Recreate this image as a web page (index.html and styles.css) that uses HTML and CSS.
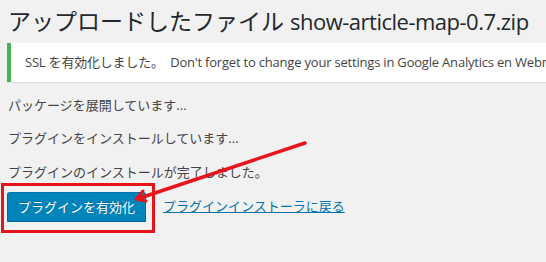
FILE: index.html
```html
<!doctype html>
<html>

<head>
  <meta charset="UTF-8">
  <title>プラグインのインストール</title>
  <link rel="stylesheet" href="styles.css">
</head>

<body>
  <div class="wrap">
    <h1>アップロードしたファイル <span class="filename">show-article-map-0.7.zip</span></h1>

    <div class="notice">
      <p>SSL を有効化しました。&nbsp; Don't forget to change your settings in Google Analytics en Webmaster Tools.</p>
    </div>

    <div class="log">
      <p>パッケージを展開しています...</p>
      <p>プラグインをインストールしています...</p>
      <p>プラグインのインストールが完了しました。</p>
    </div>

    <div class="actions">
      <a class="button-primary" href="#">プラグインを有効化</a>
      <a class="back-link" href="#">プラグインインストーラに戻る</a>
    </div>
  </div>

  <!-- annotation drawn over the screenshot -->
  <div class="mark-box"></div>
  <svg class="mark-arrow" width="546" height="262" viewBox="0 0 546 262">
    <line x1="305" y1="143" x2="137" y2="199" stroke="#e8141b" stroke-width="3.5" stroke-linecap="round" />
    <polyline points="143,191 136,199 146,201" fill="none" stroke="#e8141b" stroke-width="3" stroke-linecap="round"
      stroke-linejoin="round" />
  </svg>
</body>

</html>
```

FILE: styles.css
```css
html,
body {
  margin: 0;
  background: #f1f1f1;
  overflow: hidden;
}

body {
  font: 13px/1.5 "Open Sans", "Noto Sans CJK JP", sans-serif;
  color: #444;
}

.wrap {
  display: flex;
  flex-direction: column;
  padding-left: 7px;
}

h1 {
  margin: 0;
  padding: 6px 0 7px 1px;
  font-size: 23px;
  font-weight: 400;
  line-height: 30px;
  color: #23282d;
  white-space: nowrap;
}

h1 .filename {
  font-size: 22px;
  letter-spacing: -0.5px;
}

.notice {
  background: #fff;
  border-left: 4px solid #46b450;
  box-shadow: 0 1px 1px rgba(0, 0, 0, .06);
  padding: 1px 12px;
  white-space: nowrap;
  width: 600px;
}

.notice p {
  margin: 6.5px 0;
  padding: 2px;
  line-height: 19.5px;
  letter-spacing: -0.2px;
}

.log {
  display: flex;
  flex-direction: column;
  gap: 13px;
  margin-top: 13px;
}

.log p {
  margin: 0;
  padding-left: 1px;
  line-height: 20.5px;
}

.actions {
  display: flex;
  align-items: center;
  gap: 17px;
  margin-top: 9.5px;
}

.button-primary {
  display: inline-block;
  height: 30px;
  box-sizing: border-box;
  padding: 0 10px 2px;
  line-height: 28px;
  background: #0085ba;
  border: 1px solid;
  border-color: #0073aa #006799 #006799;
  border-radius: 3px;
  box-shadow: 0 1px 0 #006799;
  color: #fff;
  text-decoration: none;
  text-shadow: 0 -1px 1px #006799;
}

.back-link {
  color: #0073aa;
  text-decoration: underline;
}

.mark-box {
  position: absolute;
  left: 1px;
  top: 183px;
  width: 148px;
  height: 44px;
  border: 3px solid #e8141b;
}

.mark-arrow {
  position: absolute;
  left: 0;
  top: 0;
}
```
